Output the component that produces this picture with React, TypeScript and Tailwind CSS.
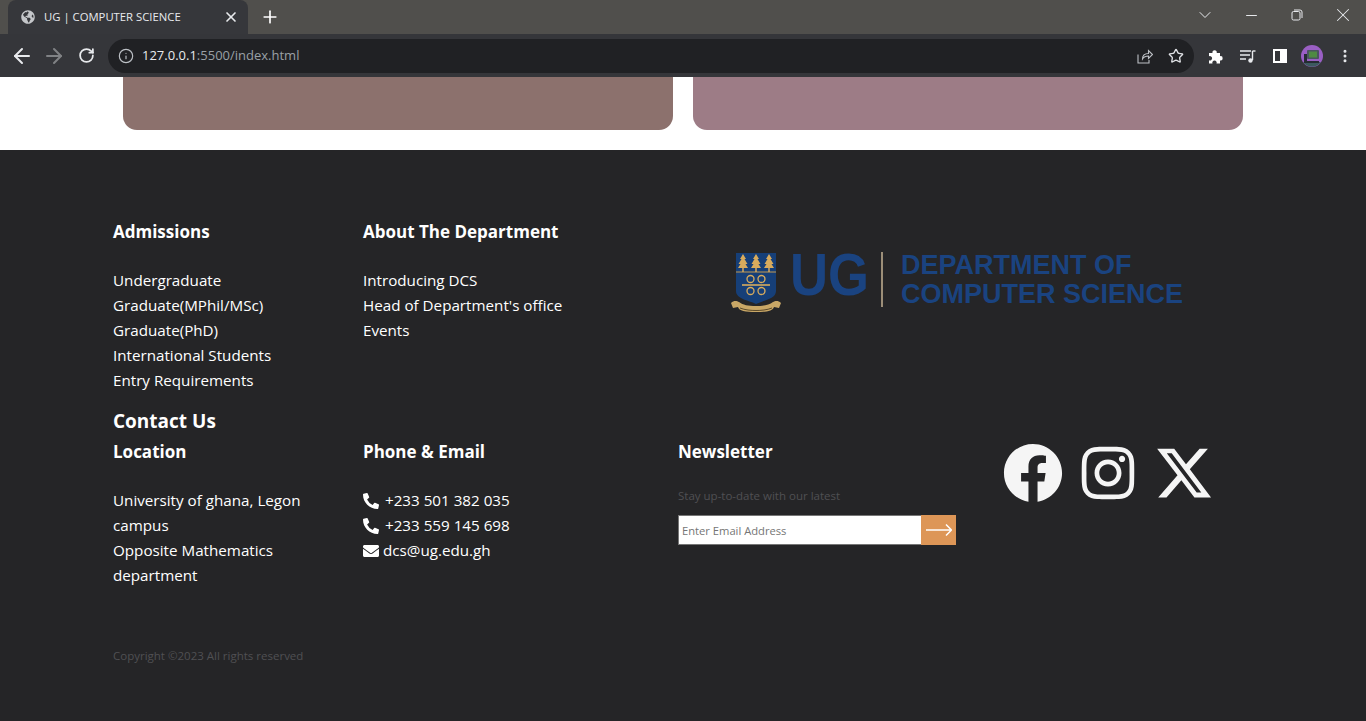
import { FaFacebook, FaInstagram, FaPhoneAlt, FaEnvelope, FaGlobeAmericas } from "react-icons/fa";
import { FaXTwitter } from "react-icons/fa6";
import { ArrowLeft, ArrowRight, RotateCw, Info, Star, ChevronDown, Minus, X, Plus, EllipsisVertical } from "lucide-react";

const admissions = ["Undergraduate", "Graduate(MPhil/MSc)", "Graduate(PhD)", "International Students", "Entry Requirements"];
const about = ["Introducing DCS", "Head of Department's office", "Events"];
const location = ["University of ghana, Legon", "campus", "Opposite Mathematics", "department"];

function BrowserChrome() {
  return (
    <header className="shrink-0 font-['Open_Sans',sans-serif]">
      <div className="flex h-[34px] items-end bg-[#504f4c] pl-2">
        <div className="flex h-[34px] w-[240px] items-center rounded-t-lg bg-[#36373b] pl-[13px] pr-[9px]">
          <FaGlobeAmericas className="h-[14px] w-[14px] text-[#c4c6c9]" />
          <span className="ml-[9px] flex-1 whitespace-nowrap text-[11.3px] text-[#e8eaed]">UG | COMPUTER SCIENCE</span>
          <X className="h-[16px] w-[16px] text-[#e8eaed]" strokeWidth={2.5} />
        </div>
        <div className="ml-[12px] flex h-[34px] items-center">
          <Plus className="h-[20px] w-[20px] text-white" strokeWidth={2} />
        </div>
        <div className="ml-auto flex h-[30px] items-center self-start text-[#e8eaed]">
          <div className="flex w-[46px] justify-center"><ChevronDown className="h-[20px] w-[20px]" strokeWidth={1.2} /></div>
          <div className="flex w-[46px] justify-center"><Minus className="h-[17px] w-[17px]" strokeWidth={1.4} /></div>
          <div className="flex w-[46px] justify-center">
            <svg width="12" height="12" viewBox="0 0 12 12" fill="none" stroke="currentColor"><rect x="1" y="2.5" width="8" height="8.5" rx="1.5" /><path d="M3 1h6a2 2 0 0 1 2 2v6" /></svg>
          </div>
          <div className="flex w-[46px] justify-center"><X className="h-[22px] w-[22px]" strokeWidth={1.1} /></div>
        </div>
      </div>
      <div className="flex h-[43px] items-center bg-[#35363a] pl-[10px]">
        <ArrowLeft className="h-[24px] w-[24px] text-[#e8eaed]" strokeWidth={2} />
        <ArrowRight className="ml-[8px] h-[24px] w-[24px] text-[#808285]" strokeWidth={2} />
        <RotateCw className="ml-[12px] h-[17px] w-[17px] text-[#e8eaed]" strokeWidth={2.5} />
        <div className="ml-[13px] flex h-[34px] w-[1086px] items-center rounded-full bg-[#202124] pl-[10px] pr-[10px]">
          <Info className="h-[16px] w-[16px] text-[#bdc1c6]" strokeWidth={1.75} />
          <span className="ml-[8px] whitespace-nowrap text-[13px] text-[#e8eaed]">127.0.0.1<span className="text-[#9aa0a6]">:5500/index.html</span></span>
          <svg className="ml-auto" width="16" height="16" viewBox="0 0 16 16" fill="none" stroke="#bdc1c6" strokeWidth="1.1">
            <path d="M1 6.500V15h11v-3" />
            <path d="M5.500 11c0-4 3-5.500 6-5.500V2.500l4 4-4 4V8c-2.500 0-4.500 .5-6 3z" />
          </svg>
          <Star className="ml-[15px] h-[16px] w-[16px] text-[#dfe1e5]" strokeWidth={2} />
        </div>
        <svg className="ml-[14px]" width="16" height="16" viewBox="0 0 16 16" fill="#fff">
          <path d="M1 5h3.500a2.200 2.200 0 1 1 4.200 0H12v3.200a2.200 2.200 0 1 1 0 4.300V15.500H8.500a2.200 2.200 0 1 0-4 0H1v-3.200a2.200 2.200 0 1 0 0-4z" />
        </svg>
        <svg className="ml-[16px]" width="16" height="16" viewBox="0 0 16 16" fill="none" stroke="#e8eaed" strokeWidth="1.4">
          <path d="M0 3h11M0 7h10M0 11h6" />
          <path d="M12.500 3v9" />
          <circle cx="10.500" cy="12.500" r="2.200" fill="#e8eaed" stroke="none" />
          <path d="M12.500 3h3" />
        </svg>
        <div className="ml-[17px] flex h-[14px] w-[14px] justify-end border-2 border-white">
          <div className="h-full w-[5px] bg-white" />
        </div>
        <svg className="ml-[14px]" width="22" height="22" viewBox="0 0 22 22">
          <circle cx="11" cy="11" r="11" fill="#9a5fc4" />
          <path d="M2 17h18a11 11 0 0 1-18 0z" fill="#3c5a5e" />
          <rect x="6" y="5" width="12" height="9" rx="1" fill="#4b5560" />
          <rect x="8" y="6.500" width="8" height="6" fill="#4f8a43" />
          <path d="M3 9h3v7h12v2H3z" fill="#262b33" />
        </svg>
        <EllipsisVertical className="ml-[14px] h-[16px] w-[16px] text-[#e8eaed]" strokeWidth={2.5} />
      </div>
    </header>
  );
}

function Crest() {
  return (
    <svg width="50" height="62" viewBox="0 0 50 62" className="shrink-0">
      <path d="M5 1h40v38c0 8-12 9-20 13C17 48 5 47 5 39z" fill="#163f78" />
      <path d="M5 20h40" stroke="#c39a50" strokeWidth="1" />
      {[12, 25, 38].map((x) => (
        <g key={x} fill="#d8ab5d">
          <path d={`M${x} 2l3 5h-1.500l3 5h-2l2.500 4h-10l2.500-4h-2l3-5h-1.500z`} />
          <rect x={x - 0.75} y="15" width="1.500" height="5" />
        </g>
      ))}
      <g fill="none" stroke="#d8ab5d" strokeWidth="1.300">
        <circle cx="19.500" cy="27" r="3.500" />
        <circle cx="30.500" cy="27" r="3.500" />
        <circle cx="19.500" cy="39" r="3.500" />
        <circle cx="30.500" cy="39" r="3.500" />
        <path d="M11 33h28" strokeWidth="1.600" />
      </g>
      <path d="M0 51c3-3 6-2 8-1 4 3 9 4 17 4s13-1 17-4c2-1 5-2 8 1l-2 5-5-1c-1 4-7 5-18 5S8 59 7 55l-5 1z" fill="#c9a766" />
      <path d="M9 56c5 2 11 2.500 16 2.500S36 58 41 56" stroke="#5b4a2a" strokeWidth="1" fill="none" />
    </svg>
  );
}

function Logo() {
  return (
    <div className="flex items-start font-['Liberation_Sans',sans-serif] font-bold text-[#1a4380]">
      <Crest />
      <div className="ml-[9px] mt-[-7px] w-[77px]">
        <span className="block origin-left scale-x-[0.878] text-[60px] leading-none">UG</span>
      </div>
      <div className="ml-[14px] h-[55px] w-[2px] bg-[#9c8e78]" />
      <div className="ml-[18px] mt-[-1px] flex flex-col text-[27px] leading-[29px] whitespace-nowrap">
        <span>DEPARTMENT OF</span>
        <span>COMPUTER SCIENCE</span>
      </div>
    </div>
  );
}

function Heading({ children }: { children: React.ReactNode }) {
  return <h3 className="text-[17px] leading-[27px] font-bold">{children}</h3>;
}

export default function App() {
  return (
    <div className="flex h-[721px] flex-col overflow-hidden bg-white font-['Open_Sans',sans-serif]">
      <BrowserChrome />
      <section className="flex h-[73px] shrink-0 items-start gap-5 pl-[123px] pr-[123px]">
        <div className="h-[53px] w-[550px] rounded-b-[14px] bg-[#8c716d]" />
        <div className="h-[53px] w-[550px] rounded-b-[14px] bg-[#9d7c86]" />
      </section>
      <footer className="flex-1 bg-[#252527] pl-[113px] pt-[68px] text-[15.2px] leading-[25px] text-white">
        <div className="flex h-[190px]">
          <div className="w-[250px]">
            <Heading>Admissions</Heading>
            <ul className="mt-[23px]">{admissions.map((a) => <li key={a}>{a}</li>)}</ul>
          </div>
          <div className="w-[368px]">
            <Heading>About The Department</Heading>
            <ul className="mt-[23px]">{about.map((a) => <li key={a}>{a}</li>)}</ul>
          </div>
          <div className="pt-[34px]"><Logo /></div>
        </div>
        <h2 className="mb-[2px] mt-[-2px] text-[19px] leading-[30px] font-bold">Contact Us</h2>
        <div className="flex">
          <div className="w-[250px]">
            <Heading>Location</Heading>
            <ul className="mt-[23px]">{location.map((a) => <li key={a}>{a}</li>)}</ul>
          </div>
          <div className="w-[315px]">
            <Heading>Phone &amp; Email</Heading>
            <ul className="mt-[23px]">
              <li className="flex items-center gap-[6px]"><FaPhoneAlt className="h-4 w-4" />+233 501 382 035</li>
              <li className="flex items-center gap-[6px]"><FaPhoneAlt className="h-4 w-4" />+233 559 145 698</li>
              <li className="flex items-center gap-[4px]"><FaEnvelope className="h-4 w-4" />dcs@ug.edu.gh</li>
            </ul>
          </div>
          <div className="w-[325px]">
            <Heading>Newsletter</Heading>
            <p className="mt-[22px] text-[11.5px] leading-[18px] text-[#505053]">Stay up-to-date with our latest</p>
            <form className="mt-[10px] flex h-[30px] w-[278px]">
              <input placeholder="Enter Email Address" className="h-full min-w-0 flex-1 border border-r-0 border-[#767676] bg-white pl-[3px] text-[11.200px] text-[#757575] outline-none placeholder:text-[#757575]" />
              <button type="button" className="flex h-full w-[35px] items-center justify-center bg-[#dd9657]">
                <svg width="26" height="12" viewBox="0 0 26 12" fill="none" stroke="#fff" strokeWidth="1.500">
                  <path d="M0 6h25M20 .5 25.500 6 20 11.500" />
                </svg>
              </button>
            </form>
          </div>
          <div className="flex h-[70px] items-center">
            <FaFacebook className="h-[60px] w-[60px] text-[#f5f5f5]" />
            <FaInstagram className="ml-[18px] h-[60px] w-[54px] text-[#f5f5f5]" />
            <FaXTwitter className="ml-[19px] h-[60px] w-[60px] text-[#f5f5f5]" />
          </div>
        </div>
        <p className="mt-[59px] text-[11.5px] leading-[18px] text-[#505053]">Copyright ©2023 All rights reserved</p>
      </footer>
    </div>
  );
}
